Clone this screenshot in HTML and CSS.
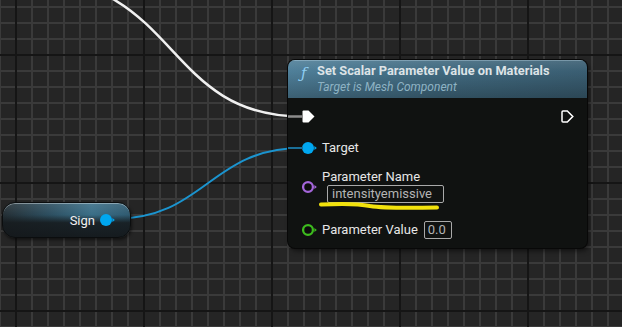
FILE: index.html
```html
<!DOCTYPE html>
<html lang="en">
<head>
    <meta charset="UTF-8">
    <meta name="viewport" content="width=device-width, initial-scale=1.0">
    <title>Blueprint Graph</title>
    <link rel="stylesheet" href="styles.css">
</head>

<body>
    <main class="graph">
        <!-- wires sit under the nodes -->
        <svg class="wires" width="622" height="327" viewBox="0 0 622 327">
            <path class="wire-exec" d="M 25,-22 C 180,-22 162,116.5 302,116.5" />
            <path class="wire-object" d="M 113,219 C 205,219 210,148 302,148" />
        </svg>

        <div class="node node-sign">
            <span class="pin-label">Sign</span>
            <svg class="pin" width="16" height="14" viewBox="0 0 16 14">
                <circle cx="6" cy="7" r="6" fill="#00a7f0" />
                <polygon points="12.4,5 14.8,7 12.4,9" fill="#00a7f0" />
            </svg>
        </div>

        <div class="node node-func">
            <div class="node-header">
                <span class="func-icon">ƒ</span>
                <div class="titles">
                    <div class="title">Set Scalar Parameter Value on Materials</div>
                    <div class="subtitle">Target is Mesh Component</div>
                </div>
            </div>
            <div class="node-body">
                <div class="exec-row">
                    <svg width="13" height="13" viewBox="0 0 13 13">
                        <path d="M0.5,1.5 Q0.5,0.5 1.5,0.5 H6.5 L12.5,6.5 L6.5,12.5 H1.5 Q0.5,12.5 0.5,11.5 Z" fill="#fff" />
                    </svg>
                    <svg width="13" height="13" viewBox="0 0 13 13">
                        <path d="M1,2 Q1,1 2,1 H6.3 L11.8,6.5 L6.3,12 H2 Q1,12 1,11 Z" fill="none" stroke="#fff" stroke-width="1.5" />
                    </svg>
                </div>
                <div class="pin-row row-target">
                    <svg class="pin" width="16" height="14" viewBox="0 0 16 14">
                        <circle cx="6" cy="7" r="6" fill="#00a7f0" />
                        <polygon points="12.4,5 14.8,7 12.4,9" fill="#00a7f0" />
                    </svg>
                    <span class="pin-label">Target</span>
                </div>
                <div class="pin-row row-name">
                    <svg class="pin" width="16" height="14" viewBox="0 0 16 14">
                        <circle cx="6" cy="7" r="4.9" fill="#0d0d0d" stroke="#a466da" stroke-width="2.3" />
                        <polygon points="12.4,5 14.8,7 12.4,9" fill="#a466da" />
                    </svg>
                    <div class="pin-stack">
                        <span class="pin-label">Parameter Name</span>
                        <span class="value-box name-box">intensityemissive</span>
                    </div>
                </div>
                <div class="pin-row row-value">
                    <svg class="pin" width="16" height="14" viewBox="0 0 16 14">
                        <circle cx="6" cy="7" r="4.9" fill="#0d0d0d" stroke="#3dbb1e" stroke-width="2.3" />
                        <polygon points="12.4,5 14.8,7 12.4,9" fill="#3dbb1e" />
                    </svg>
                    <span class="pin-label">Parameter Value</span>
                    <span class="value-box">0.0</span>
                </div>
            </div>
        </div>

        <!-- wire ends drawn over the node edge, plus the yellow marker stroke -->
        <svg class="overlay" width="622" height="327" viewBox="0 0 622 327">
            <line x1="288" y1="116.5" x2="303" y2="116.5" stroke="#8c8c8c" stroke-width="2.5" />
            <line x1="288" y1="148" x2="303" y2="148" stroke="#1a6f98" stroke-width="2" />
            <path d="M321,204.5 C340,203.5 358,203.5 370,206 C385,208.5 415,208 437,207.5" fill="none" stroke="#f2e20c" stroke-width="4" stroke-linecap="round" />
        </svg>
    </main>
</body>
</html>
```

FILE: styles.css
```css
body {
    margin: 0;
    padding: 0;
    font-family: Roboto, "Liberation Sans", sans-serif;
    background: #262626;
}

.graph {
    position: relative;
    width: 622px;
    height: 327px;
    overflow: hidden;
    background-color: #252525;
    background-image:
        linear-gradient(90deg, #151515 2px, transparent 2px),
        linear-gradient(0deg, #151515 2px, transparent 2px),
        linear-gradient(90deg, #3a3a3a 2px, transparent 2px),
        linear-gradient(0deg, #3a3a3a 2px, transparent 2px);
    background-size: 128px 128px, 128px 128px, 16px 16px, 16px 16px;
    background-position: 15px 0, 0 56px, -1px 0, 0 8px;
}

.wires,
.overlay {
    position: absolute;
    left: 0;
    top: 0;
}

.overlay {
    z-index: 3;
}

.wire-exec {
    fill: none;
    stroke: #f0f0f0;
    stroke-width: 2.5;
}

.wire-object {
    fill: none;
    stroke: #1b94cf;
    stroke-width: 2;
}

.node {
    position: absolute;
    z-index: 2;
}

.pin {
    display: block;
    flex: none;
}

.pin-label {
    font-size: 13px;
    line-height: 14px;
    color: #e6e6e6;
}

/* pure function node */
.node-sign {
    left: 2px;
    top: 202px;
    width: 129px;
    height: 36px;
    box-sizing: border-box;
    border: 1px solid #0b0d0e;
    border-radius: 13px;
    display: flex;
    align-items: center;
    justify-content: flex-end;
    gap: 5px;
    padding-right: 14px;
    background:
        linear-gradient(180deg, rgba(255, 255, 255, 0.10) 0, rgba(255, 255, 255, 0) 35%, rgba(22, 27, 30, 0.9) 58%, rgba(20, 24, 27, 0.96) 100%),
        linear-gradient(90deg, #242f35 0%, #2c4d5e 35%, #3a6e87 70%, #2f5a70 100%);
    box-shadow: inset 0 1px 0 rgba(220, 230, 235, 0.45), 1px 2px 3px rgba(0, 0, 0, 0.5);
}

.node-sign .pin-label {
    color: #f0f0f0;
    padding-top: 1px;
}

/* function call node */
.node-func {
    left: 288px;
    top: 60px;
    width: 299px;
    height: 188px;
    border-radius: 7px;
    overflow: hidden;
    background: #101211;
    box-shadow: 0 0 0 1px #080808, 2px 3px 5px rgba(0, 0, 0, 0.55);
}

.node-header {
    height: 38px;
    box-sizing: border-box;
    display: flex;
    align-items: flex-start;
    gap: 8px;
    padding: 3px 12px 0 13px;
    background:
        linear-gradient(180deg, rgba(255, 255, 255, 0.10) 0, rgba(255, 255, 255, 0) 30%, rgba(0, 0, 0, 0.25) 100%),
        linear-gradient(90deg, #4f7f99 0%, #416a80 50%, #3a5e72 100%);
    box-shadow: inset 0 1px 0 rgba(200, 225, 240, 0.35);
}

.func-icon {
    font-family: "DejaVu Serif", serif;
    font-style: italic;
    font-size: 15px;
    line-height: 20px;
    color: #8fcdf2;
    width: 8px;
}

.title {
    font-size: 12.8px;
    font-weight: bold;
    line-height: 15px;
    color: #dde3e6;
}

.subtitle {
    font-size: 12px;
    font-style: italic;
    line-height: 15px;
    color: #8eb3c4;
    margin-top: 2px;
}

.node-body {
    display: flex;
    flex-direction: column;
    padding: 12px 13px 9px 14px;
}

.exec-row {
    display: flex;
    justify-content: space-between;
    height: 13px;
}

.exec-row svg {
    display: block;
}

.pin-row {
    display: flex;
    align-items: center;
    gap: 4px;
}

.row-target {
    margin-top: 17px;
    height: 16px;
}

.row-name {
    margin-top: 14px;
    height: 33px;
}

.row-value {
    margin-top: 18px;
    height: 18px;
}

.pin-stack {
    display: flex;
    flex-direction: column;
    gap: 1px;
}

.value-box {
    box-sizing: border-box;
    height: 18px;
    border: 1px solid #a9a9a9;
    border-radius: 2px;
    padding: 0 4px;
    font-size: 13px;
    line-height: 16px;
    color: #b4b4b4;
}

.name-box {
    margin-left: 5px;
    width: 117px;
}

.row-value .value-box {
    margin-left: 2px;
    width: 28px;
    padding: 0 3px;
}
```
